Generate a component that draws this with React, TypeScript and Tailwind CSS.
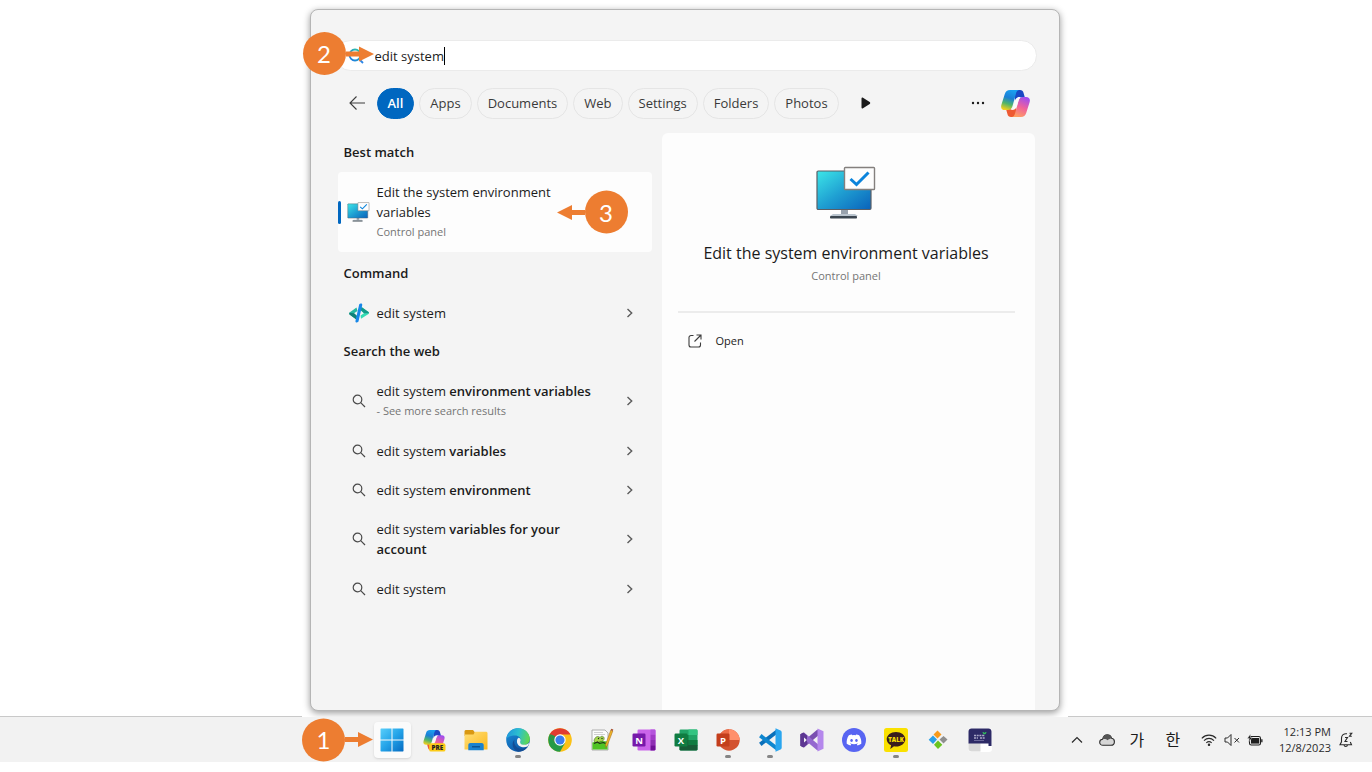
import React, { useState } from 'react';
import { FaDiscord } from 'react-icons/fa';

interface WebResult {
  typed: string;
  rest?: string;
  note?: string;
}

interface TaskbarApp {
  name: string;
  icon: React.ReactNode;
  active?: boolean;
  running?: boolean;
}

const FILTERS = ['All', 'Apps', 'Documents', 'Web', 'Settings', 'Folders', 'Photos'];

const WEB_RESULTS: WebResult[] = [
  { typed: 'edit system', rest: 'environment variables', note: '- See more search results' },
  { typed: 'edit system', rest: 'variables' },
  { typed: 'edit system', rest: 'environment' },
  { typed: 'edit system', rest: 'variables for your account' },
  { typed: 'edit system' },
];

/* ---------- Icons ---------- */

const CopilotIcon = ({ id, className, pre = false }: { id: string; className: string; pre?: boolean }) => (
  <svg viewBox="0 0 29 27" className={className} aria-hidden="true" overflow="visible">
    <defs>
      <linearGradient id={`${id}-a`} x1="0.6" y1="0" x2="0.3" y2="1">
        <stop offset="0" stopColor="#1aa0f0" />
        <stop offset="0.4" stopColor="#1b7fd6" />
        <stop offset="0.7" stopColor="#4fb46a" />
        <stop offset="1" stopColor="#f2cf1c" />
      </linearGradient>
      <linearGradient id={`${id}-b`} x1="0.7" y1="0" x2="0.3" y2="1">
        <stop offset="0" stopColor="#a04df0" />
        <stop offset="0.5" stopColor="#f0629a" />
        <stop offset="1" stopColor="#ffa060" />
      </linearGradient>
    </defs>
    <path d="M13 0h6c2 0 3 1 3.500 2.800L24 8h-6c-2 0-3.300.8-4 3z" fill="#1a48c4" />
    <path d="M16 27h-6c-2 0-3-1-3.500-2.800L5 19h6c2 0 3.300-.8 4-3z" fill="#ee5a32" />
    <path d="M9 0h9c-1.700.3-2.400 1.500-3 3.500L11.500 16C10.700 18.500 9.500 20 7 20H4C.8 20-.5 18 .4 14.800L3.800 4C4.700 1.200 6.200 0 9 0z" fill={`url(#${id}-a)`} />
    <path d="M20 27h-9c1.700-.3 2.400-1.500 3-3.500L17.500 11C18.300 8.500 19.500 7 22 7h3c3.200 0 4.500 2 3.600 5.200L25.200 23c-.9 2.800-2.400 4-5.200 4z" fill={`url(#${id}-b)`} />
    <path d="M21.500 7h-3c-2.400 0-3.600 1.200-4.300 3.500l-2 6.500c-.6 1.800-1.700 2.800-3.700 3h2.500c2.400 0 3.800-1 4.500-3.200l2.200-6.800c.6-1.800 1.800-2.900 3.800-3z" fill="#fafafa" />
    {pre && (
      <g>
        <rect x="8" y="18" width="22" height="11" rx="2.500" fill="#fccb16" />
        <text x="19" y="26.500" textAnchor="middle" fontSize="8.500" fontWeight="800" fontFamily="Open Sans, sans-serif" fill="#222">PRE</text>
      </g>
    )}
  </svg>
);

const MonitorIcon = ({ id, className }: { id: string; className: string }) => (
  <svg viewBox="0 0 60 54" className={className} aria-hidden="true">
    <defs>
      <linearGradient id={id} x1="0" y1="0" x2="1" y2="1">
        <stop offset="0" stopColor="#3ce6e8" />
        <stop offset="0.5" stopColor="#1f9fd2" />
        <stop offset="1" stopColor="#0a62bb" />
      </linearGradient>
    </defs>
    <path d="M25 43h7v6h-7z" fill="#98a2ad" />
    <path d="M17 48h22l3 2H14z" fill="#b9c4ce" />
    <rect x="14" y="50" width="27" height="2.500" rx="0.800" fill="#3b4650" />
    <rect x="1" y="5" width="54" height="38.500" rx="1.200" fill={`url(#${id})`} stroke="#5b5f66" strokeWidth="1.200" />
    <rect x="28.500" y="1.500" width="30" height="22" rx="0.800" fill="#fdfdfd" stroke="#84807e" strokeWidth="1.400" />
    <path d="M34.500 13l6 5.500L52.500 6.500" fill="none" stroke="#0b84dc" strokeWidth="3" />
  </svg>
);

const CommandIcon = () => (
  <svg viewBox="0 0 20 20" className="h-5 w-5 shrink-0" aria-hidden="true">
    <path d="M7.500 4.500L8.500 8 5 10.300 8 13l-1 3.200L.5 11.600C-.1 11-.1 10 .5 9.400z" fill="#27b8a0" />
    <path d="M.3 9.700L5 10.300 8 13l-1 3.200L.5 11.600z" fill="#127f78" />
    <path d="M12.500 4L19.500 9c.6.500.6 1.500 0 2.100L12 15.800 11.500 12.500 15 10.200 11.500 7z" fill="#34dcb4" />
    <path d="M12.500 4l7 5c.4.300.5.800.4 1.200h-4.900L11.500 7z" fill="#14998a" />
    <path d="M11.600.6c1.200-.2 1.900.5 1.600 1.700L9.600 18c-.3 1.200-1.200 1.600-2.300 1.400-.8-.2-1-.9-.8-1.700L10 2.200c.2-.9.700-1.400 1.600-1.600z" fill="#1787e8" />
  </svg>
);

const SearchIcon = () => (
  <svg viewBox="0 0 14 14" className="h-3.5 w-3.5 shrink-0" fill="none" stroke="#4a4a4a" strokeWidth="1.200" aria-hidden="true">
    <circle cx="5.500" cy="5.500" r="4.300" />
    <path d="M8.700 8.700L13 13" />
  </svg>
);

const ChevronRight = () => (
  <svg viewBox="0 0 8 12" className="h-3 w-2 shrink-0" fill="none" stroke="#5c5c5c" strokeWidth="1.400" aria-hidden="true">
    <path d="M1.500 2l4.200 4-4.200 4" />
  </svg>
);

const WindowsIcon = () => (
  <svg viewBox="0 0 24 24" className="h-6 w-6" aria-hidden="true">
    <defs>
      <linearGradient id="win" gradientUnits="userSpaceOnUse" x1="0" y1="0" x2="24" y2="24">
        <stop offset="0" stopColor="#5bd0fb" />
        <stop offset="0.5" stopColor="#23a3e8" />
        <stop offset="1" stopColor="#0468c0" />
      </linearGradient>
    </defs>
    <path d="M1 .5h10.500v11H.5V1zM12.500.5H23l.5.500v10.500h-11zM.5 12.500h11v11H1l-.5-.5zM12.500 12.500h11V23l-.5.500H12.500z" fill="url(#win)" />
  </svg>
);

const ExplorerIcon = () => (
  <svg viewBox="0 0 24 24" className="h-6 w-6" aria-hidden="true">
    <defs>
      <linearGradient id="folder" x1="0" y1="0" x2="1" y2="1">
        <stop offset="0" stopColor="#ffe07a" />
        <stop offset="1" stopColor="#fcb81c" />
      </linearGradient>
    </defs>
    <path d="M1.500 2H9l2 2.500V8H.5V3z" fill="#d99812" />
    <path d="M11 3.800h11.500l1 1V21.500h-23V6.500H9.500z" fill="url(#folder)" />
    <path d="M6.500 15h11c1.400 0 2.200.9 2.200 2.200v5H4.300v-5c0-1.300.8-2.200 2.200-2.200z" fill="#1b82cf" />
    <path d="M8 18h8v1.500H8z" fill="#0c5494" />
  </svg>
);

const EdgeIcon = () => (
  <svg viewBox="0 0 24 24" className="h-6 w-6" aria-hidden="true">
    <defs>
      <linearGradient id="edge-a" x1="0" y1="0.3" x2="1" y2="0.5">
        <stop offset="0" stopColor="#1f96dc" />
        <stop offset="0.5" stopColor="#2cc0cf" />
        <stop offset="1" stopColor="#62d84e" />
      </linearGradient>
      <linearGradient id="edge-b" x1="0" y1="0" x2="0.6" y2="1">
        <stop offset="0" stopColor="#1c93dc" />
        <stop offset="1" stopColor="#0d55a6" />
      </linearGradient>
    </defs>
    <circle cx="12" cy="12" r="11.800" fill="url(#edge-b)" />
    <path d="M.3 11C1 4.700 5.800.2 12 .2c6.800 0 11.800 4.800 11.800 10.500 0 4-3 6.300-6.300 6.300-3 0-4.300-1.200-3.500-2.400 1.500-2 .7-7-5-7C5 7.600 1.500 9 .3 11z" fill="url(#edge-a)" />
    <path d="M8.500 11.500c-1.500 5 2.500 9.800 8 9.300 2.200-.2 4-1 5.400-2.200-1.400 2.400-4.600 5.200-9.400 5.200C6.500 22 5 15 8.500 11.500z" fill="#134d95" />
    <path d="M12.600 9.700c1.800.4 2.600 2.200 1.700 4.100-.6 1.500.5 2.800 3.200 3 2.300.1 4.500-.6 5.900-2-.3 1.500-1 2.800-2 3.700-4.300 1.800-9.900-.1-10.400-4.300-.2-2 .2-3.900 1.600-4.500z" fill="#f2f2f2" />
  </svg>
);

const ChromeIcon = () => (
  <svg viewBox="0 0 24 24" className="h-6 w-6" aria-hidden="true">
    <circle cx="12" cy="12" r="11.800" fill="#fbc116" />
    <path d="M12 12L1.800 6.100A11.800 11.800 0 0 0 12 23.800l5-8.800z" fill="#249a48" />
    <path d="M1.800 6.100A11.800 11.800 0 0 1 22.200 6.100L22.300 6.600H12L6.900 15z" fill="#e03c31" />
    <path d="M1.800 6.100L6.900 15l3-2-3-5z" fill="#249a48" />
    <circle cx="12" cy="12" r="5.700" fill="#fff" />
    <circle cx="12" cy="12" r="4.600" fill="#3a7ded" />
  </svg>
);

const NotepadIcon = () => (
  <svg viewBox="0 0 24 24" className="h-6 w-6" aria-hidden="true">
    <path d="M2 2h13l3 3v17H2z" fill="#fcfcfc" stroke="#9d9d9d" strokeWidth="0.800" />
    <path d="M4 4.500h9M4 6.500h11" stroke="#c4c4c4" strokeWidth="0.800" />
    <path d="M2.400 14.500c3-1.500 11-2 15.200-1v8.100H2.400z" fill="#4fc424" />
    <path d="M4 12.500C5 8.500 8 7.500 10 9.500c1-2 4-1.500 4.200.8.200 2-2 3.500-4 3.200-2.700 2-6 1.500-6.200-1z" fill="#a5d84b" stroke="#2f5220" strokeWidth="0.500" />
    <path d="M4 15.500l3.500-1.500 2 1.500 4-1 2 1" fill="none" stroke="#1d2b17" strokeWidth="1.100" />
    <circle cx="8.500" cy="10.500" r="0.700" fill="#222" />
    <circle cx="12" cy="10.500" r="0.700" fill="#222" />
    <path d="M20.800 2l2 1L17.500 17l-1.700 2.500-.2-3z" fill="#f0b429" stroke="#9c6414" strokeWidth="0.500" />
    <path d="M21.300.7l2 .9-.5 1.400-2-1z" fill="#a65032" />
  </svg>
);

const OfficeTile = ({ letter, color }: { letter: string; color: string }) => (
  <g>
    <rect x="0.500" y="5.500" width="13" height="13" rx="1.200" fill={color} />
    <text x="7" y="15.500" textAnchor="middle" fontSize="9.500" fontWeight="700" fontFamily="Open Sans, sans-serif" fill="#fff">{letter}</text>
  </g>
);

const OneNoteIcon = () => (
  <svg viewBox="0 0 24 24" className="h-6 w-6" aria-hidden="true">
    <rect x="5.500" y="1.500" width="18" height="21" rx="1.200" fill="#ca64ea" />
    <path d="M18.500 1.500h3.800c.7 0 1.200.5 1.200 1.200v4h-5z" fill="#b455dc" />
    <path d="M18.500 6.700h5v5.300h-5z" fill="#a03bc6" />
    <path d="M18.500 12h5v5.200h-5z" fill="#8e2fb3" />
    <path d="M18.500 17.200h5v4.100c0 .7-.5 1.200-1.200 1.200h-3.800z" fill="#6f1196" />
    <OfficeTile letter="N" color="#7719aa" />
  </svg>
);

const ExcelIcon = () => (
  <svg viewBox="0 0 24 24" className="h-6 w-6" aria-hidden="true">
    <rect x="5.500" y="1.500" width="18" height="21" rx="1.200" fill="#21a366" />
    <path d="M14.500 1.500h7.800c.7 0 1.200.5 1.200 1.200V7h-9z" fill="#33c481" />
    <path d="M5.500 7h9v10h-9z" fill="#107c41" />
    <path d="M14.500 12h9v5.500h-9z" fill="#107c41" />
    <path d="M5.500 12h9v10.500H6.700c-.7 0-1.200-.5-1.200-1.200zM14.500 17h9v4.300c0 .7-.5 1.200-1.200 1.200h-7.800z" fill="#185c37" />
    <OfficeTile letter="X" color="#107c41" />
  </svg>
);

const PowerPointIcon = () => (
  <svg viewBox="0 0 24 24" className="h-6 w-6" aria-hidden="true">
    <circle cx="13" cy="12" r="10.700" fill="#d35230" />
    <path d="M13 1.300V12H2.300A10.700 10.700 0 0 1 13 1.300z" fill="#ed6c47" />
    <path d="M13 1.300A10.700 10.700 0 0 1 23.700 12H13z" fill="#ff8f6b" />
    <OfficeTile letter="P" color="#c43e1c" />
  </svg>
);

const VsCodeIcon = () => (
  <svg viewBox="0 0 24 24" className="h-6 w-6" aria-hidden="true">
    <path d="M2.300 16.300L19 3.500" stroke="#0a70ba" strokeWidth="4" fill="none" />
    <path d="M2.300 7.700L19 20.500" stroke="#0e86cf" strokeWidth="4" fill="none" />
    <path d="M17.500.3l5 2.300c.7.300 1.200 1 1.200 1.700v15.400c0 .7-.5 1.400-1.200 1.700l-5 2.300z" fill="#2aa6ef" />
  </svg>
);

const VisualStudioIcon = () => (
  <svg viewBox="0 0 24 24" className="h-6 w-6" aria-hidden="true">
    <path d="M.4 6.200L3.400 4.500v15l-3-1.700z" fill="#5d3792" />
    <path d="M2.500 17.500L19 3.500" stroke="#7a4fb0" strokeWidth="5" fill="none" />
    <path d="M2.500 6.500L19 20.500" stroke="#9468cf" strokeWidth="5" fill="none" />
    <path d="M.4 6.200L3.400 4.500 7 7.500v9l-3.600 3-3-1.700z" fill="#5d3792" />
    <path d="M4 9.500v5L6.800 12z" fill="#f2f2f2" />
    <path d="M17.500.4l6 2.800v17.600l-6 2.800z" fill="#b588ec" />
  </svg>
);

const DiscordIcon = () => (
  <span className="flex h-6 w-6 items-center justify-center rounded-full bg-[#5865f2]">
    <FaDiscord className="h-4 w-4 text-white" aria-hidden="true" />
  </span>
);

const KakaoIcon = () => (
  <svg viewBox="0 0 24 24" className="h-6 w-6" aria-hidden="true">
    <rect width="24" height="24" rx="2.500" fill="#fae100" />
    <path d="M12 4c5.200 0 9.300 3.200 9.300 7.200s-4.100 7.300-9.300 7.300c-.7 0-1.400-.1-2-.2L6.300 21l.8-3.700c-2.700-1.300-4.400-3.500-4.400-6.100C2.700 7.200 6.800 4 12 4z" fill="#3a1d1d" />
    <text x="12" y="13.500" textAnchor="middle" fontSize="6" fontWeight="800" fontFamily="Open Sans, sans-serif" fill="#fae100">TALK</text>
  </svg>
);

const DiamondsIcon = () => (
  <svg viewBox="0 0 24 24" className="h-6 w-6" aria-hidden="true">
    <path d="M11.500 2.500l4 4-4 4-4-4z" fill="#f79a1c" />
    <path d="M7 7.500l4 4-4 4.500-4.300-4.300z" fill="#2a9fe6" />
    <path d="M17.500 8l4 3.500-4 4-4-4z" fill="#8f8f8f" />
    <path d="M12 12.500l4.300 4.200L12 21l-4-4.300z" fill="#69c420" />
  </svg>
);

const LibraryIcon = () => (
  <svg viewBox="0 0 24 24" className="h-6 w-6" aria-hidden="true">
    <rect x="0.500" y="0.500" width="23.500" height="23.500" rx="3" fill="#fff" />
    <path d="M.5 15h12v8.500h-9c-1.700 0-3-1.300-3-3z" fill="#d9d9d9" />
    <path d="M3.500.5h17c1.700 0 3 1.300 3 3V18h-3v-2.500H.5v-12c0-1.700 1.300-3 3-3z" fill="#2d2a66" />
    <path d="M6 7.500h11M6 10h4M12 10h5" stroke="#a9a7c8" strokeWidth="1.300" strokeDasharray="2 0.700" />
    <path d="M6 12.500h10" stroke="#7c7aa8" strokeWidth="0.800" />
    <path d="M14.500 4c1 0 1.700.5 2 1 .4-.8 1-1.200 2-1-.3 1.700-1 2.300-2 2.300S14.800 5.500 14.500 4z" fill="#2fbf5a" />
  </svg>
);

const TASKBAR_APPS: TaskbarApp[] = [
  { name: 'Start', icon: <WindowsIcon />, active: true },
  { name: 'Copilot', icon: <CopilotIcon id="copilot-bar" className="h-5 w-[22px]" pre /> },
  { name: 'File Explorer', icon: <ExplorerIcon /> },
  { name: 'Microsoft Edge', icon: <EdgeIcon />, running: true },
  { name: 'Google Chrome', icon: <ChromeIcon /> },
  { name: 'Notepad++', icon: <NotepadIcon /> },
  { name: 'OneNote', icon: <OneNoteIcon /> },
  { name: 'Excel', icon: <ExcelIcon /> },
  { name: 'PowerPoint', icon: <PowerPointIcon />, running: true },
  { name: 'Visual Studio Code', icon: <VsCodeIcon />, running: true },
  { name: 'Visual Studio', icon: <VisualStudioIcon /> },
  { name: 'Discord', icon: <DiscordIcon /> },
  { name: 'KakaoTalk', icon: <KakaoIcon />, running: true },
  { name: 'Remote tool', icon: <DiamondsIcon /> },
  { name: 'Library', icon: <LibraryIcon /> },
];

/* ---------- Step markers ---------- */

const StepArrow = ({ flip = false }: { flip?: boolean }) => (
  <svg viewBox="0 0 28 16" className={flip ? 'h-4 w-7 rotate-180' : 'h-4 w-7'} fill="#ed7d31" aria-hidden="true">
    <path d="M0 5.500h13V.5L28 8 13 15.500v-5H0z" />
  </svg>
);

const StepBadge = ({ step }: { step: number }) => (
  <span className="flex h-[43px] w-[43px] items-center justify-center rounded-full bg-[#ed7d31] font-['Lato',sans-serif] text-2xl text-white">
    {step}
  </span>
);

/* ---------- Search window ---------- */

const SectionTitle = ({ children }: { children: React.ReactNode }) => (
  <h2 className="flex h-[39px] items-center pb-0.5 pl-1.5 font-semibold">{children}</h2>
);

const ResultRow = ({ icon, children }: { icon: React.ReactNode; children: React.ReactNode }) => (
  <li>
    <button type="button" className="flex min-h-[39px] w-full items-center pr-[18px] text-left">
      <span className="flex w-[39px] shrink-0 justify-center pl-[3px]">{icon}</span>
      <span className="flex-1 pr-6">{children}</span>
      <ChevronRight />
    </button>
  </li>
);

const SearchBox = () => {
  const [query, setQuery] = useState('edit system');

  return (
    <div className="relative mr-[22px] ml-6">
      <label className="flex h-[31px] items-center rounded-full border border-[#ebebeb] bg-white pl-3">
        <svg viewBox="0 0 16 16" className="h-4 w-4 shrink-0" fill="none" strokeWidth="1.800" aria-hidden="true">
          <defs>
            <linearGradient id="bing" x1="1" y1="0" x2="0" y2="1">
              <stop offset="0" stopColor="#30c8a0" />
              <stop offset="1" stopColor="#1a74e8" />
            </linearGradient>
          </defs>
          <circle cx="7" cy="7" r="5.500" stroke="url(#bing)" />
          <path d="M11 11l4 4" stroke="#2a86e8" />
        </svg>
        <input
          type="text"
          aria-label="Search"
          value={query}
          onChange={(e) => setQuery(e.target.value)}
          className="field-sizing-content ml-[11px] outline-none"
        />
        <span className="h-[18px] w-px bg-black" />
      </label>
      <div className="absolute -top-2 -left-8 flex items-center">
        <StepBadge step={2} />
        <StepArrow />
      </div>
    </div>
  );
};

const FilterBar = () => {
  const [selected, setSelected] = useState('All');

  return (
    <div className="mt-4 mr-[29px] ml-[38px] flex h-8 items-center">
      <button type="button" aria-label="Back" className="mr-3">
        <svg viewBox="0 0 16 16" className="h-4 w-4" fill="none" stroke="#3c3c3c" strokeWidth="1.100">
          <path d="M16 8H1M7.500 1.500L1 8l6.500 6.500" />
        </svg>
      </button>
      <div className="flex gap-[5px]">
        {FILTERS.map((filter) => (
          <button
            key={filter}
            type="button"
            onClick={() => setSelected(filter)}
            className={
              filter === selected
                ? 'h-[31px] rounded-full border border-[#0067c0] bg-[#0067c0] px-2.5 font-semibold text-white'
                : 'h-[31px] rounded-full border border-[#e5e5e5] px-2.5 text-[#3a3a3a]'
            }
          >
            {filter}
          </button>
        ))}
      </div>
      <button type="button" aria-label="More filters" className="ml-[22px]">
        <svg viewBox="0 0 10 12" className="h-3 w-2.5" fill="#1a1a1a">
          <path d="M.5 1.500C.5.500 1.300.200 2 .7l6.700 4.400c.7.500.7 1.300 0 1.800L2 11.300c-.7.500-1.500.200-1.500-.8z" />
        </svg>
      </button>
      <button type="button" aria-label="Options" className="mr-4 ml-auto">
        <svg viewBox="0 0 14 4" className="h-1 w-3.5" fill="#1a1a1a">
          <circle cx="2" cy="2" r="1.200" />
          <circle cx="7" cy="2" r="1.200" />
          <circle cx="12" cy="2" r="1.200" />
        </svg>
      </button>
      <button type="button" aria-label="Copilot">
        <CopilotIcon id="copilot-top" className="h-[27px] w-[29px]" />
      </button>
    </div>
  );
};

const ResultList = () => (
  <section className="pl-[27px]">
    <SectionTitle>Best match</SectionTitle>
    <div className="relative">
      <button type="button" className="flex min-h-20 w-full items-center rounded-sm bg-[#fdfdfd] text-left">
        <span className="h-[23px] w-[3px] shrink-0 rounded-full bg-[#0067c0]" />
        <span className="flex w-9 shrink-0 justify-center">
          <MonitorIcon id="monitor-small" className="h-5 w-[23px]" />
        </span>
        <span className="w-48">
          Edit the system environment variables
          <small className="block text-[11px] leading-5 text-[#757575]">Control panel</small>
        </span>
      </button>
      <div className="absolute top-1/2 right-6 flex -translate-y-1/2 items-center">
        <StepArrow flip />
        <StepBadge step={3} />
      </div>
    </div>

    <div className="mt-0.5">
      <SectionTitle>Command</SectionTitle>
      <ul>
        <ResultRow icon={<CommandIcon />}>edit system</ResultRow>
      </ul>
      <SectionTitle>Search the web</SectionTitle>
      <ul>
        {WEB_RESULTS.map((result, index) => (
          <ResultRow key={index} icon={<SearchIcon />}>
            <span className={result.note || (result.rest && result.rest.length > 22) ? 'block py-2.5' : 'block'}>
              {result.typed} {result.rest && <b className="font-semibold">{result.rest}</b>}
              {result.note && (
                <small className="block text-[11px] leading-5 text-[#757575]">{result.note}</small>
              )}
            </span>
          </ResultRow>
        ))}
      </ul>
    </div>
  </section>
);

const PreviewPane = () => (
  <section className="mr-6 ml-2.5 rounded-t-md bg-[#fdfdfd] pr-5 pl-4">
    <div className="flex flex-col items-center pt-[33px] text-center">
      <MonitorIcon id="monitor-large" className="h-[54px] w-[60px]" />
      <h1 className="mt-[21px] text-base leading-6">Edit the system environment variables</h1>
      <p className="text-[11px] leading-[22px] text-[#757575]">Control panel</p>
    </div>
    <hr className="mt-6 border-t-2 border-[#ececec]" />
    <button type="button" className="mt-[18px] flex h-5 items-center gap-3.5 pl-2.5 text-[11px]">
      <svg viewBox="0 0 14 14" className="h-3.5 w-3.5" fill="none" stroke="#3c3c3c" strokeWidth="1.100" aria-hidden="true">
        <path d="M5.500 1.500H3a2 2 0 0 0-2 2V11a2 2 0 0 0 2 2h7.500a2 2 0 0 0 2-2V8.500M8.500 1h4.500v4.500M13 1L6.500 7.500" />
      </svg>
      Open
    </button>
  </section>
);

/* ---------- Taskbar ---------- */

const SystemTray = () => (
  <div className="flex items-center justify-end pr-[19px]">
    <svg viewBox="0 0 12 8" className="h-2 w-3" fill="none" stroke="#2b2b2b" strokeWidth="1.200" aria-hidden="true">
      <path d="M1 6.500l5-5 5 5" />
    </svg>
    <svg viewBox="0 0 16 12" className="ml-4 h-3 w-4" aria-hidden="true">
      <path d="M4 11.300C2 11.300.7 10 .7 8.200c0-1.700 1.200-2.900 2.900-3C4.300 2.400 6 .8 8.300.8c2.200 0 3.800 1.400 4.300 3.500 1.700.2 2.800 1.600 2.800 3.400 0 2-1.300 3.600-3.400 3.600z" fill="#d6d6d6" stroke="#2b2b2b" strokeWidth="1.100" />
      <path d="M3.600 5.200C4.300 2.400 6 .8 8.300.8c2.200 0 3.800 1.400 4.300 3.500l-2 .6c-1 .3-1.500.7-2 1.300C7.500 5.200 5.500 4.700 3.600 5.200z" fill="#555" />
    </svg>
    <button type="button" className="ml-1 w-9 text-base">가</button>
    <button type="button" className="w-9 text-base">한</button>
    <div className="ml-2.5 flex items-center gap-[7px]">
      <svg viewBox="0 0 16 12" className="h-3 w-4" fill="none" stroke="#2b2b2b" strokeWidth="1.100" aria-hidden="true">
        <path d="M.8 4.300C5 .100 11 .100 15.200 4.300M3 6.600c3-3 7-3 10 0M5.300 8.900c1.700-1.600 3.700-1.600 5.400 0" />
        <circle cx="8" cy="10.800" r="0.700" fill="#2b2b2b" />
      </svg>
      <svg viewBox="0 0 16 14" className="h-3.5 w-4" fill="none" stroke="#2b2b2b" strokeWidth="1" aria-hidden="true">
        <path d="M1 5h2.500L7 1.500v11L3.500 9H1zM10.500 5l4.500 4.500M15 5l-4.500 4.500" />
      </svg>
      <svg viewBox="0 0 16 12" className="h-3 w-4" aria-hidden="true">
        <rect x="2.500" y="2.500" width="11" height="8.500" rx="1.800" fill="none" stroke="#1f1f1f" strokeWidth="1.100" />
        <rect x="4" y="4" width="8.200" height="5.600" fill="#1f1f1f" />
        <path d="M14.200 5.200h1.300v3h-1.300z" fill="#1f1f1f" />
        <path d="M3.500 0L.300 4.500h2.200L1.500 8l4-4.500H3.500z" fill="#1f1f1f" stroke="#f2f2f2" strokeWidth="0.400" />
      </svg>
    </div>
    <time className="ml-4 text-right text-[11px] leading-4 text-[#2b2b2b]">
      12:13 PM
      <br />
      12/8/2023
    </time>
    <svg viewBox="0 0 14 16" className="ml-2 h-4 w-3.5" fill="none" stroke="#2b2b2b" strokeWidth="1.100" aria-hidden="true">
      <path d="M8 1.800C4.800 1.200 2.500 3.300 2.500 6.300v3.500L1 12.800h11.500L11.300 10M5 13c.3 2 3.200 2 3.500 0" />
      <path d="M6 5.500h2.500L6 9.500h2.500M10.500 1.200h2.300l-2.300 3h2.300" />
    </svg>
  </div>
);

const Taskbar = () => (
  <footer className="relative grid h-[46px] grid-cols-[1fr_auto_1fr] items-center border-t border-[#c9c9c9] bg-[#f2f2f2]">
    <nav className="relative col-start-2 flex">
      <div className="absolute top-1/2 -left-[69px] flex -translate-y-1/2 items-center">
        <StepBadge step={1} />
        <StepArrow />
      </div>
      {TASKBAR_APPS.map((app) => (
        <button key={app.name} type="button" aria-label={app.name} className="relative flex h-9 w-[42px] items-center justify-center">
          <span
            className={
              app.active
                ? 'flex h-9 w-[37px] items-center justify-center rounded-sm bg-[#fbfbfb] shadow-sm'
                : 'flex h-9 w-[37px] items-center justify-center'
            }
          >
            {app.icon}
          </span>
          {app.running && <span className="absolute bottom-0 h-[3px] w-1.5 rounded-full bg-[#858585]" />}
        </button>
      ))}
    </nav>
    <SystemTray />
  </footer>
);

export default function App() {
  return (
    <div className="flex min-h-screen flex-col bg-white pb-2.5 font-['Open_Sans','Noto_Sans_CJK_KR',sans-serif] text-[13px] leading-5 text-[#1b1b1b]">
      <div className="relative z-10 -mb-px flex flex-1 flex-col pr-[3px]">
        <div className="mx-auto flex w-full max-w-[766px] flex-1 flex-col overflow-hidden bg-white px-2 pt-[9px] pb-1.5">
          <main className="flex flex-1 flex-col rounded-lg border border-[#b5b5b5] bg-[#f4f4f4] pt-[30px] shadow-[0_2px_7px_rgba(0,0,0,0.4)]">
            <SearchBox />
            <FilterBar />
            <div className="mt-3.5 grid flex-1 grid-cols-[341fr_407fr]">
              <ResultList />
              <PreviewPane />
            </div>
          </main>
        </div>
      </div>
      <Taskbar />
    </div>
  );
}
